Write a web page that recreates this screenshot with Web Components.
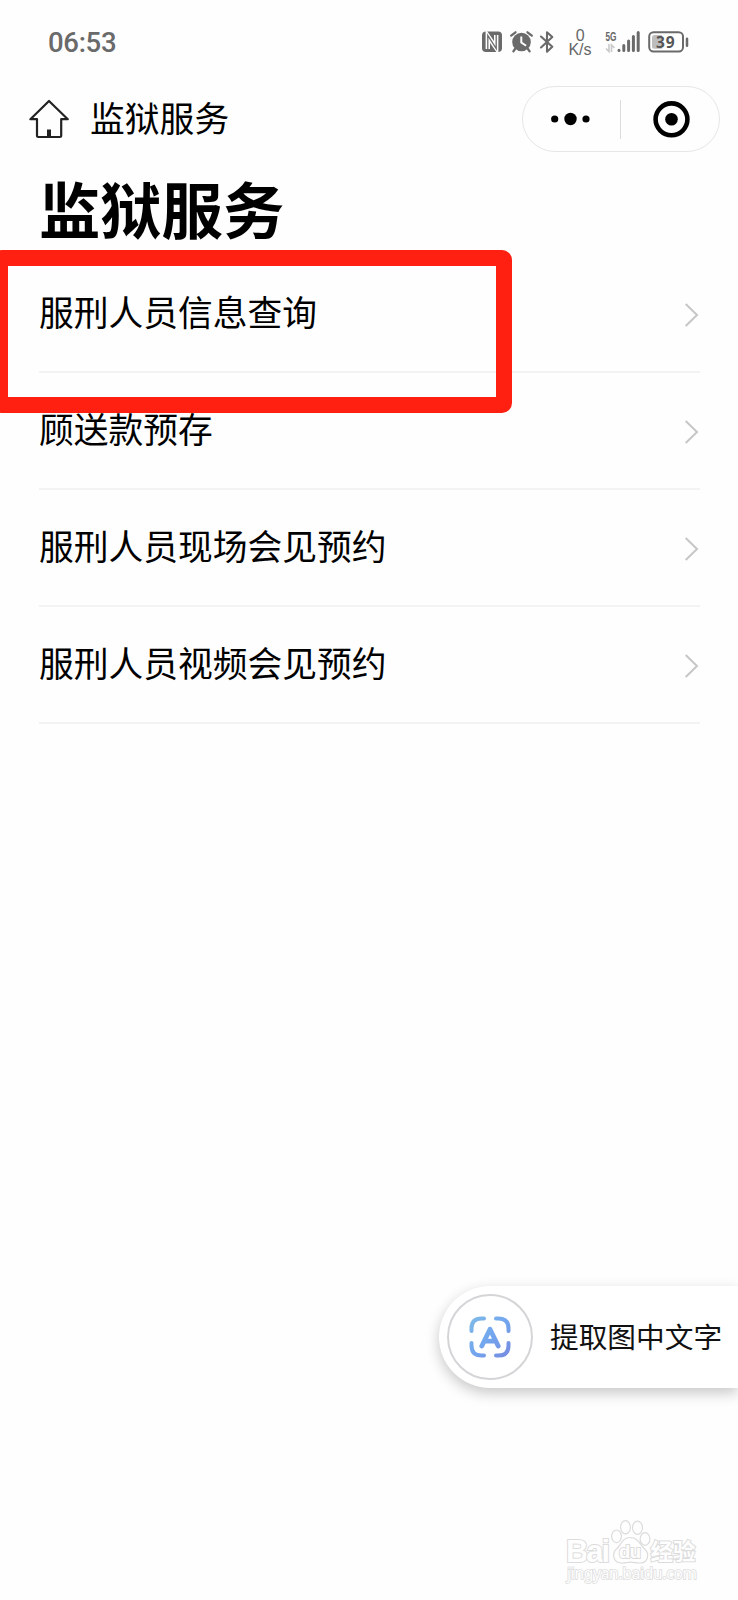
<!DOCTYPE html>
<html lang="zh-CN">
<head>
<meta charset="utf-8">
<title>监狱服务</title>
<style>
html,body{margin:0;padding:0}
body{width:738px;height:1600px;overflow:hidden;background:#fefefe;color:#000;font-family:"Noto Sans CJK SC","Noto Sans",sans-serif}
</style>
</head>
<body>
<service-app></service-app>
<script>
const define=(name,html)=>customElements.define(name,class extends HTMLElement{
  constructor(){super();const t=document.createElement('template');t.innerHTML=html;
    this.attachShadow({mode:'open'}).append(t.content.cloneNode(true));}
});

define('status-bar',`<style>
:host{display:flex;box-sizing:border-box;height:84px;padding:30px 0 0 48px;align-items:flex-start;color:#6a6a6a}
time{font:500 27.5px/24px Roboto,sans-serif;letter-spacing:-.3px;width:434px;margin-top:1px}
svg{display:block;flex:none;overflow:visible}
text{font-family:"Liberation Sans",sans-serif;fill:#666}
</style>
<time>06:53</time>
<svg width="20" height="24" viewBox="0 0 20 24"><rect y="1.5" width="20" height="20.5" rx="4" fill="#6a6a6a"/><path d="M5.8 19V6L14.2 18V5" fill="none" stroke="#fefefe" stroke-width="4.4"/><path d="M5.8 20V5.5L14.2 18.5V4" fill="none" stroke="#6a6a6a" stroke-width="1.3"/></svg>
<svg width="23" height="24" viewBox="0 0 23 24" style="margin-left:8px"><circle cx="11.5" cy="12" r="9.3" fill="#6a6a6a"/><path d="M1.2 5.6 5.5 2.3M21.8 5.6 17.5 2.3M5 19 3.4 21.4M18 19l1.6 2.4" stroke="#6a6a6a" stroke-width="2.3" stroke-linecap="round"/><path d="M11.3 6.500v6l4.800 3.300" fill="none" stroke="#fefefe" stroke-width="2"/></svg>
<svg width="14" height="24" viewBox="0 0 14 24" style="margin-left:7px"><path d="M1 6.500 12.300 16.800 7 21.700V2.200L12.300 7 1 17.500" fill="none" stroke="#6a6a6a" stroke-width="2.100" stroke-linejoin="round" stroke-linecap="round"/></svg>
<svg width="24" height="26" viewBox="0 0 24 26" style="margin-left:15px"><text x="11.3" y="10.6" font-size="16" text-anchor="middle">0</text><text x="11" y="25" font-size="16" text-anchor="middle" textLength="23">K/s</text></svg>
<svg width="35" height="24" viewBox="0 0 35 24" style="margin-left:12px"><text x="0.500" y="11" font-size="12" font-weight="700" textLength="11" lengthAdjust="spacingAndGlyphs">5G</text><path d="M4 14v7.500L1 18.500M6.500 22V15l3 3" stroke="#c8c8c8" stroke-width="1.600" fill="none"/><path d="M14 20.300v.3M18.800 15.600v5M23.600 11v9.600M28.400 6.500v14.100M33.200 2.400v18.200" stroke="#6a6a6a" stroke-width="3" stroke-linecap="round"/></svg>
<svg width="42" height="24" viewBox="0 0 42 24" style="margin-left:8px"><rect x="1.200" y="2.200" width="33.800" height="19.400" rx="4.300" fill="none" stroke="#6a6a6a" stroke-width="2"/><path d="M6.500 5H14v13.800H6.500A2.500 2.500 0 0 1 4 16.300V7.500A2.500 2.500 0 0 1 6.500 5Z" fill="#bdbdbd"/><path d="M39 8.700v7" stroke="#6a6a6a" stroke-width="2.500" stroke-linecap="round"/><text x="17.300" y="17.600" font-size="15.500" font-weight="700" text-anchor="middle" textLength="18.500" style="fill:#555;font-family:'Open Sans',sans-serif">39</text></svg>`);

define('capsule-menu',`<style>
:host{display:flex;box-sizing:border-box;width:198px;height:66px;border:1.5px solid #e6e6e6;border-radius:33px;align-items:center;background:#fefefe}
i{width:1px;height:39px;background:#dcdcdc}
svg{display:block}
</style>
<svg width="97" height="39" viewBox="0 0 97 39"><circle cx="31.7" cy="19" r="3.6"/><circle cx="47.5" cy="19" r="6.2"/><circle cx="63" cy="19" r="3.6"/></svg><i></i>
<svg width="97" height="39" viewBox="0 0 97 39"><circle cx="50.5" cy="19.3" r="15.9" fill="none" stroke="#000" stroke-width="4.6"/><circle cx="50.5" cy="19.3" r="6.3"/></svg>`);

define('nav-bar',`<style>
:host{display:flex;box-sizing:border-box;height:70px;padding:2px 18px 0 29px;align-items:flex-start}
svg{margin-top:13px;flex:none}
span{flex:1;margin:4px 0 0 20px;font-size:34.8px;line-height:54px}
</style>
<svg width="41" height="40" viewBox="0 0 41 40"><path d="M20 2 1.400 20.200H8V36.600Q8 38 9.400 38H30.800Q32.200 38 32.200 36.600V20.200H38.800Z" fill="none" stroke="#222" stroke-width="2.200" stroke-linejoin="round"/><path d="M18 30.500h4V38h-4z" fill="#222"/></svg>
<span><slot></slot></span><capsule-menu></capsule-menu>`);

define('page-title',`<style>:host{display:block;box-sizing:border-box;height:102px;padding-left:39px;font-size:61.3px;font-weight:700;line-height:107px}</style><slot></slot>`);

define('service-row',`<style>
:host{display:flex;box-sizing:border-box;height:117px;margin:0 38px 0 39px;border-bottom:2px solid #f3f3f3;justify-content:space-between;align-items:flex-start}
span{font-size:34.75px;line-height:52px;margin-top:29px;white-space:nowrap}
svg{margin:46px 1px 0 0}
</style><span><slot></slot></span><svg width="15" height="26" viewBox="0 0 15 26"><path d="M1.700 2 13 13 1.700 24" fill="none" stroke="#c6c6c6" stroke-width="2"/></svg>`);

define('highlight-frame',`<style>:host{position:absolute;left:-8px;top:249.5px;box-sizing:border-box;width:520px;height:163.5px;border:16px solid #ff2011;border-radius:10px}</style>`);

define('extract-button',`<style>
:host{display:flex;position:absolute;right:0;top:1286px;box-sizing:border-box;width:299px;height:102px;padding-left:8px;align-items:center;background:#fff;border-radius:51px 0 0 51px;box-shadow:0 5px 14px rgba(0,0,0,.22)}
div{box-sizing:border-box;width:86px;height:86px;border:2px solid #d5d5d8;border-radius:50%;display:grid;place-items:center;margin-top:-1px}
span{margin:-3px 0 0 17px;font-size:28.7px;line-height:44px;color:#111;white-space:nowrap}
</style>
<div><svg width="42" height="42" viewBox="0 0 42 42"><defs><linearGradient id="g" gradientUnits="userSpaceOnUse" x1="0" y1="0" x2="42" y2="42"><stop stop-color="#80bce6"/><stop offset=".5" stop-color="#72a6ee"/><stop offset="1" stop-color="#7788df"/></linearGradient></defs><g fill="none" stroke="url(#g)" stroke-width="4" stroke-linecap="round" stroke-linejoin="round"><path d="M2.500 15V12.500Q2.500 2.500 12.500 2.500H15M27 2.500h2.500Q39.500 2.500 39.500 12.500V15M39.500 27v2.500Q39.500 39.500 29.500 39.500H27M15 39.500H12.500Q2.500 39.500 2.500 29.500V27"/><path d="M12.800 30 21 13.200 29.200 30M16.500 25.200h9" stroke-width="4.800"/></g></svg></div><span><slot></slot></span>`);

define('baidu-watermark',`<style>
:host{position:absolute;left:564px;top:1516px;width:136px;height:68px}
svg{display:block;overflow:visible}
text{fill:#fefefe;stroke:#dcdcdc;stroke-width:2px;paint-order:stroke;font-family:"Liberation Sans",sans-serif}
</style>
<svg width="136" height="68" viewBox="0 0 136 68">
<text x="2" y="45.500" font-size="31" font-weight="700" textLength="44">Bai</text>
<g fill="#fefefe" stroke="#dcdcdc" stroke-width="1.200"><ellipse cx="52.500" cy="20.300" rx="4.900" ry="6.300"/><ellipse cx="61.500" cy="11.300" rx="4.900" ry="6.600"/><ellipse cx="73.500" cy="11.800" rx="5" ry="6.600"/><ellipse cx="81" cy="23" rx="4.900" ry="6.300"/><path d="M66 21.500c-8 0-9 8-14 12-4 4-3 13 5 13.500 4 .3 6-.8 9.500-.8s6 1 10 .8c8-.5 9-9.500 4.500-13.500C76 29 74.500 21.500 66 21.500Z"/></g>
<text x="66" y="42" font-size="18.500" font-weight="700" text-anchor="middle" textLength="22">du</text>
<text x="86.500" y="43.500" font-size="22.500" font-weight="700" style="font-family:'Noto Sans CJK SC',sans-serif">经验</text>
<text x="3" y="62.500" font-size="15.500" textLength="130" style="stroke-width:1.500px;font-family:'Noto Sans',sans-serif">jingyan.baidu.com</text>
</svg>`);

define('service-app',`<style>:host{display:block;position:relative;width:738px;height:1600px;overflow:hidden}section{display:block}</style>
<status-bar></status-bar>
<nav-bar>监狱服务</nav-bar>
<page-title>监狱服务</page-title>
<section><service-row>服刑人员信息查询</service-row><service-row>顾送款预存</service-row><service-row>服刑人员现场会见预约</service-row><service-row>服刑人员视频会见预约</service-row></section>
<highlight-frame></highlight-frame>
<extract-button>提取图中文字</extract-button>
<baidu-watermark></baidu-watermark>`);
</script>
</body>
</html>
